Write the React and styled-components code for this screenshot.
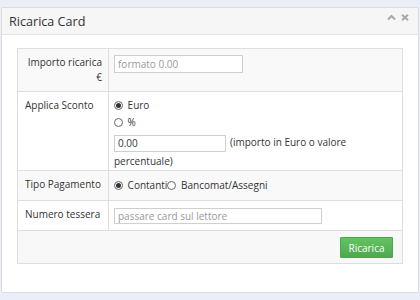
import React from 'react';
import styled, { createGlobalStyle } from 'styled-components';

const GlobalStyle = createGlobalStyle`
    html, body {
        margin: 0;
        padding: 0;
        background: #e9eef8;
        font-family: "Open Sans", "Liberation Sans", sans-serif;
        color: #333;
    }
`;

const Page = styled.div`
    padding: 7px 1px 6px 1px;
`;

const Panel = styled.div`
    background: #fff;
    border: 1px solid #dcdcdc;
    border-radius: 2px;
`;

const Header = styled.div`
    height: 26px;
    background: #f6f6f6;
    border-bottom: 1px solid #e3e3e3;
    display: flex;
    align-items: center;
    justify-content: space-between;
    padding: 0 9px 0 7px;
`;

const Title = styled.div`
    font-size: 12.6px;
    color: #333;
    margin-top: 1px;
`;

const Tools = styled.div`
    display: flex;
    gap: 5px;
    align-self: flex-start;
    margin-top: 6px;
`;

const Body = styled.div`
    padding: 13px 15px 28px 15px;
`;

const Table = styled.table`
    width: 100%;
    border-collapse: collapse;
    border: 1px solid #dedede;
    font-size: 10px;
`;

const Row = styled.tr`
    background: ${(p) => (p.$striped ? '#f9f9f9' : '#fff')};
`;

const Label = styled.td`
    width: 77px;
    border: 1px solid #dedede;
    padding: 6px 6px 6px 7px;
    vertical-align: top;
    line-height: 15px;
    text-align: ${(p) => (p.$right ? 'right' : 'left')};
    color: #333;
`;

const Cell = styled.td`
    border: 1px solid #dedede;
    padding: ${(p) => p.$pad || '6px 5px'};
    vertical-align: top;
    line-height: 17px;
`;

const TextInput = styled.input`
    box-sizing: border-box;
    width: ${(p) => p.$w}px;
    height: ${(p) => p.$h || 17}px;
    border: 1px solid #cfcfcf;
    padding: 0 3px;
    font-family: inherit;
    font-size: 10px;
    color: #333;
    background: #fff;
    vertical-align: middle;
    outline: none;
    &::placeholder {
        color: #9a9a9a;
    }
`;

const Radio = styled.input.attrs({ type: 'radio' })`
    appearance: none;
    box-sizing: border-box;
    width: 9px;
    height: 9px;
    margin: 0 2px 0 0;
    border: 1px solid #666;
    border-radius: 50%;
    background: #fff;
    vertical-align: -1px;
    position: relative;
    &:checked::after {
        content: '';
        position: absolute;
        left: 1px;
        top: 1px;
        width: 5px;
        height: 5px;
        border-radius: 50%;
        background: #333;
    }
`;

const Line = styled.div`
    line-height: 17px;
`;

const Wrap = styled.div`
    line-height: 18px;
    margin-top: 2px;
`;

const Hint = styled.span`
    margin-left: 4px;
`;

const Footer = styled.td`
    background: #f8f8f8;
    border: 1px solid #dedede;
    padding: 6px 9px 5px 9px;
    text-align: right;
`;

const Button = styled.button`
    height: 21px;
    width: 53px;
    border: 1px solid #4fa34f;
    border-radius: 1px;
    background: linear-gradient(#62c462, #4fa84f);
    color: #fff;
    font-family: inherit;
    font-size: 10px;
    padding: 0;
    cursor: pointer;
`;

const ChevronUp = () => (
    <svg width="9" height="7" viewBox="0 0 9 7">
        <path d="M1 5.5 L4.5 2 L8 5.5" fill="none" stroke="#a8a8a8" strokeWidth="2" />
    </svg>
);

const Close = () => (
    <svg width="8" height="7" viewBox="0 0 8 7">
        <path d="M1 0.8 L7 6.2 M7 0.8 L1 6.2" fill="none" stroke="#a8a8a8" strokeWidth="2" />
    </svg>
);

export default function App() {
    return (
        <Page>
            <GlobalStyle />
            <Panel>
                <Header>
                    <Title>Ricarica Card</Title>
                    <Tools>
                        <ChevronUp />
                        <Close />
                    </Tools>
                </Header>
                <Body>
                    <Table>
                        <tbody>
                            <Row $striped>
                                <Label $right>Importo ricarica €</Label>
                                <Cell>
                                    <TextInput $w={129} $h={18} placeholder="formato 0.00" />
                                </Cell>
                            </Row>
                            <Row>
                                <Label>Applica Sconto</Label>
                                <Cell $pad="5px 5px 0 5px">
                                    <Line>
                                        <Radio name="sconto" defaultChecked /> Euro
                                    </Line>
                                    <Line>
                                        <Radio name="sconto" /> %
                                    </Line>
                                    <Wrap>
                                        <TextInput $w={112} defaultValue="0.00" />
                                        <Hint>(importo in Euro o valore percentuale)</Hint>
                                    </Wrap>
                                </Cell>
                            </Row>
                            <Row $striped>
                                <Label>Tipo Pagamento</Label>
                                <Cell>
                                    <Radio name="pag" defaultChecked /> Contanti
                                    <Radio name="pag" /> Bancomat/Assegni
                                </Cell>
                            </Row>
                            <Row>
                                <Label>Numero tessera</Label>
                                <Cell>
                                    <TextInput $w={208} $h={16} placeholder="passare card sul lettore" />
                                </Cell>
                            </Row>
                            <tr>
                                <Footer colSpan={2}>
                                    <Button>Ricarica</Button>
                                </Footer>
                            </tr>
                        </tbody>
                    </Table>
                </Body>
            </Panel>
        </Page>
    );
}
